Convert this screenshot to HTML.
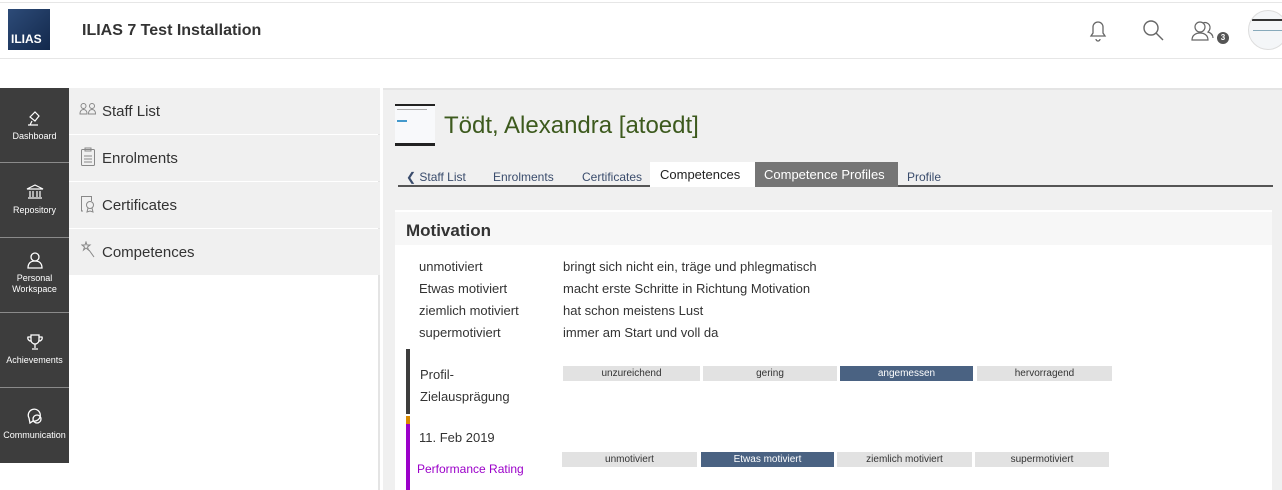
<!DOCTYPE html>
<html><head><meta charset="utf-8"><style>
*{box-sizing:border-box;margin:0;padding:0}
body{width:1282px;height:490px;overflow:hidden;background:#fff;font-family:"Liberation Sans",sans-serif;color:#161616;position:relative}
.abs{position:absolute}
.hdr{left:0;top:2px;width:1282px;height:57px;border-top:1px solid #e6e6e6;border-bottom:1px solid #e6e6e6;background:#fff}
.logo{left:8px;top:9px;width:42px;height:41px;background:linear-gradient(135deg,#2d4b78,#13294c);color:#fff;font-weight:bold;font-size:12px;padding:23px 0 0 3px}
.title{left:82px;top:22px;font-size:16px;font-weight:bold;color:#333}
.meta{left:0;top:88px;width:69px;height:375px;background:#3d3d3d}
.mi{position:absolute;left:0;width:69px;color:#fff;font-size:9px;text-align:center;line-height:11px}
.sep{position:absolute;left:0;width:69px;height:1px;background:#8a8a8a}
.slate{left:69px;top:88px;width:311px;height:402px;background:#fff;border-right:2px solid #e4e4e4}
.si{position:absolute;left:0;width:311px;height:46px;background:#f0f0f0;font-size:15px;color:#333;padding:15px 0 0 33px}
.main{left:383px;top:88px;width:899px;height:402px;background:#f0f0f0;border-top:2px solid #e4e4e4}
.tabs{left:398px;top:162px;width:875px;height:25px;border-bottom:2px solid #555}
.tab{position:absolute;top:6px;font-size:12px;color:#3a4c6c}
.card{left:395px;top:210px;width:877px;height:280px;background:#fff}
.ch{left:395px;top:212px;width:877px;height:33px;background:#f7f7f7;font-size:17px;font-weight:bold;color:#333;padding:9px 0 0 11px}
.row{position:absolute;font-size:13px;color:#333}
.lv{position:absolute;height:15px;background:#e2e2e2;font-size:10px;color:#333;text-align:center;line-height:15px}
.lv.on{background:#4a6282;color:#fff}
</style></head><body>
<div class="abs hdr"></div>
<div class="abs logo">ILIAS</div>
<div class="abs title">ILIAS 7 Test Installation</div>
<svg class="abs" style="left:1085px;top:18px" width="26" height="26" viewBox="0 0 26 26" fill="none" stroke="#666" stroke-width="1.3"><path d="M6 18h14l-2-3v-6a5 5 0 0 0-10 0v6z M11 21a2 2 0 0 0 4 0"/></svg>
<svg class="abs" style="left:1140px;top:18px" width="26" height="26" viewBox="0 0 26 26" fill="none" stroke="#666" stroke-width="1.4"><circle cx="11" cy="10" r="7"/><path d="M16 15l7 7"/></svg>
<svg class="abs" style="left:1190px;top:18px" width="30" height="28" viewBox="0 0 30 28" fill="none" stroke="#666" stroke-width="1.2"><circle cx="10" cy="9" r="5"/><path d="M2 22c0-5 4-7 8-7s8 2 8 7z"/><path d="M13 5a5 5 0 0 1 7 5c0 2-1 3-2 4 3 1 5 3 5 6"/></svg>
<div class="abs" style="left:1217px;top:32px;width:12px;height:12px;border-radius:6px;background:#555;color:#fff;font-size:8px;font-weight:bold;text-align:center;line-height:12px">3</div>
<div class="abs" style="left:1248px;top:10px;width:40px;height:40px;border-radius:20px;background:#f4f6f8;border:1px solid #ddd;overflow:hidden"><div style="margin:8px 0 0 3px;height:2px;background:#333;width:40px"></div><div style="margin:9px 0 0 4px;height:1px;background:#8ab;width:36px"></div></div>

<div class="abs meta">
<div class="mi" style="top:20px"><svg width="20" height="20" viewBox="0 0 20 20" fill="none" stroke="#fff" stroke-width="1.2"><path d="M5 9l5-5 4 4-4 5z M3 17h10 M7 13l-2 4"/></svg><br>Dashboard</div>
<div class="sep" style="top:74px"></div>
<div class="mi" style="top:94px"><svg width="20" height="20" viewBox="0 0 20 20" fill="none" stroke="#fff" stroke-width="1.2"><path d="M2 7l8-4 8 4z M5 9v6 M8 9v6 M12 9v6 M15 9v6 M3 16h14"/></svg><br>Repository</div>
<div class="sep" style="top:149px"></div>
<div class="mi" style="top:162px"><svg width="20" height="20" viewBox="0 0 20 20" fill="none" stroke="#fff" stroke-width="1.3"><circle cx="10" cy="7" r="4"/><path d="M3 18c0-5 3-7 7-7s7 2 7 7z"/></svg><br>Personal<br>Workspace</div>
<div class="sep" style="top:224px"></div>
<div class="mi" style="top:244px"><svg width="20" height="20" viewBox="0 0 20 20" fill="none" stroke="#fff" stroke-width="1.3"><path d="M6 3h8v5a4 4 0 0 1-8 0z M6 5H3a3 3 0 0 0 3 4 M14 5h3a3 3 0 0 1-3 4 M10 12v4 M7 17h6"/></svg><br>Achievements</div>
<div class="sep" style="top:299px"></div>
<div class="mi" style="top:319px"><svg width="20" height="20" viewBox="0 0 20 20" fill="none" stroke="#fff" stroke-width="1.3"><path d="M4 11a6 6 0 1 1 4 3l-3 2z"/><circle cx="12" cy="12" r="4"/></svg><br>Communication</div>
</div>

<div class="abs slate">
<div class="si" style="top:0">Staff List</div>
<div class="si" style="top:47px">Enrolments</div>
<div class="si" style="top:94px">Certificates</div>
<div class="si" style="top:141px">Competences</div>
</div>
<svg class="abs" style="left:79px;top:102px" width="18" height="14" viewBox="0 0 18 14" fill="none" stroke="#888" stroke-width="1"><circle cx="4.5" cy="4" r="2.5"/><path d="M1 12c0-3 1.5-4.5 3.5-4.5S8 9 8 12z"/><circle cx="13" cy="4" r="2.5"/><path d="M9.5 12c0-3 1.5-4.5 3.5-4.5s3.5 1.5 3.5 4.5z"/></svg>
<svg class="abs" style="left:80px;top:147px" width="16" height="20" viewBox="0 0 16 20" fill="none" stroke="#888" stroke-width="1"><rect x="1.5" y="2.5" width="13" height="16" rx="1"/><rect x="5" y="1" width="6" height="3"/><path d="M4 9h8M4 12h8M4 15h8"/></svg>
<svg class="abs" style="left:80px;top:194px" width="16" height="20" viewBox="0 0 16 20" fill="none" stroke="#888" stroke-width="1"><path d="M3 17H1.5V2.5h10V7"/><circle cx="10" cy="11" r="3.5"/><path d="M8 14l-1 4 3-1 3 1-1-4"/></svg>
<svg class="abs" style="left:81px;top:241px" width="16" height="18" viewBox="0 0 16 18" fill="none" stroke="#888" stroke-width="1"><path d="M5 1l1 3 3 0-2.5 2 1 3-2.5-2-2.5 2 1-3L1 4h3z M8 9l5 7"/></svg>

<div class="abs main"></div>
<div class="abs" style="left:395px;top:104px;width:40px;height:42px;background:#f8f9fb;border-top:2px solid #222;border-bottom:3px solid #222"><div style="margin:3px 2px;height:1px;background:#aaa;width:30px"></div><div style="margin:10px 2px;height:2px;background:#49c;width:10px"></div></div>
<div class="abs" style="left:444px;top:112px;font-size:24px;color:#3d5a1e">Tödt, Alexandra [atoedt]</div>
<div class="abs tabs"></div>
<div class="abs" style="left:650px;top:162px;width:105px;height:25px;background:#fff"></div>
<div class="abs" style="left:755px;top:162px;width:143px;height:25px;background:#757575"></div>
<div class="tab" style="left:406px;top:170px">❮ Staff List</div>
<div class="tab" style="left:493px;top:170px">Enrolments</div>
<div class="tab" style="left:582px;top:170px">Certificates</div>
<div class="tab" style="left:660px;top:167px;color:#222;font-size:13px">Competences</div>
<div class="tab" style="left:764px;top:167px;color:#fff;font-size:13px">Competence Profiles</div>
<div class="tab" style="left:907px;top:170px">Profile</div>

<div class="abs card"></div>
<div class="abs ch">Motivation</div>
<div class="row" style="left:419px;top:259px">unmotiviert</div><div class="row" style="left:563px;top:259px">bringt sich nicht ein, träge und phlegmatisch</div>
<div class="row" style="left:419px;top:281px">Etwas motiviert</div><div class="row" style="left:563px;top:281px">macht erste Schritte in Richtung Motivation</div>
<div class="row" style="left:419px;top:303px">ziemlich motiviert</div><div class="row" style="left:563px;top:303px">hat schon meistens Lust</div>
<div class="row" style="left:419px;top:325px">supermotiviert</div><div class="row" style="left:563px;top:325px">immer am Start und voll da</div>

<div class="abs" style="left:406px;top:349px;width:4px;height:65px;background:#3d3d3d"></div>
<div class="abs" style="left:406px;top:416px;width:4px;height:8px;background:#d98a00"></div>
<div class="abs" style="left:406px;top:424px;width:4px;height:66px;background:#9b00c9"></div>
<div class="row" style="left:420px;top:364px;line-height:22px">Profil-<br>Zielausprägung</div>
<div class="lv" style="left:563px;top:366px;width:137px">unzureichend</div>
<div class="lv" style="left:703px;top:366px;width:134px">gering</div>
<div class="lv on" style="left:840px;top:366px;width:133px">angemessen</div>
<div class="lv" style="left:977px;top:366px;width:135px">hervorragend</div>
<div class="row" style="left:419px;top:430px">11. Feb 2019</div>
<div class="row" style="left:417px;top:462px;color:#9b00c9;font-size:12px">Performance Rating</div>
<div class="lv" style="left:562px;top:452px;width:135px">unmotiviert</div>
<div class="lv on" style="left:701px;top:452px;width:133px">Etwas motiviert</div>
<div class="lv" style="left:837px;top:452px;width:135px">ziemlich motiviert</div>
<div class="lv" style="left:975px;top:452px;width:134px">supermotiviert</div>
</body></html>
